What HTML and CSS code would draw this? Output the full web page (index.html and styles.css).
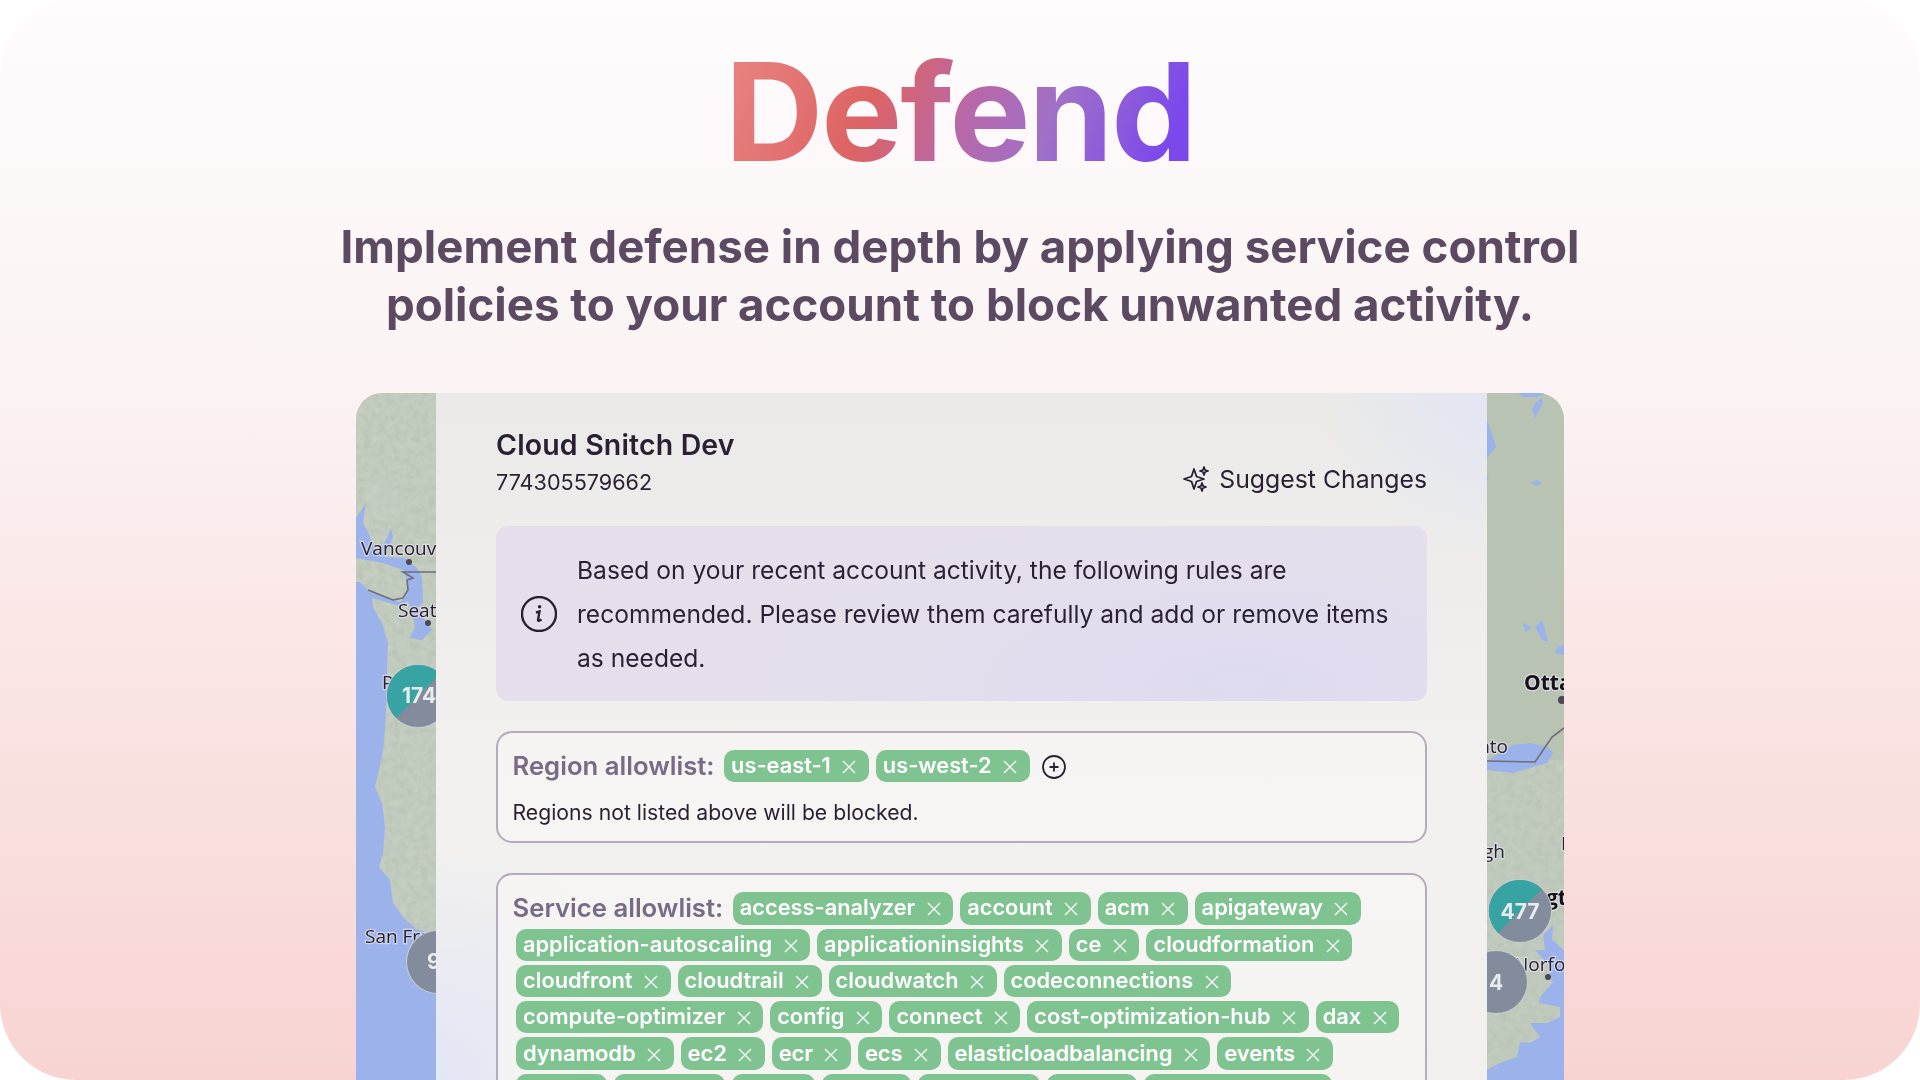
FILE: index.html
```html
<!DOCTYPE html>
<html>
<head>
    <title>Defend</title>
    <link rel="stylesheet" href="styles.css">
</head>
<body>
    <svg class="defs" width="0" height="0">
        <defs>
            <symbol id="x" viewBox="0 0 14 14">
                <path d="M1 1L13 13M13 1L1 13"/>
            </symbol>
            <filter id="relief" x="0" y="0" width="100%" height="100%">
                <feTurbulence type="fractalNoise" baseFrequency="0.14" numOctaves="3" seed="7"/>
                <feColorMatrix type="saturate" values="0"/>
                <feComponentTransfer>
                    <feFuncA type="linear" slope="0" intercept="1"/>
                </feComponentTransfer>
            </filter>
        </defs>
    </svg>

    <div class="slide">
        <h1 class="title">Defend</h1>
        <p class="subtitle">Implement defense in depth by applying service control<br>policies to your account to block unwanted activity.</p>

        <div class="card">
            <div class="map map-left">
                <svg viewBox="356 393 80 687" width="80" height="687">
                    <rect class="land" x="356" y="393" width="80" height="687"/>
                    <rect class="relief" x="356" y="393" width="80" height="687" filter="url(#relief)"/>
                    <ellipse class="snow" cx="383" cy="500" rx="15" ry="20"/>
                    <ellipse class="snow" cx="372" cy="490" rx="7" ry="7"/>
                    <path class="water" d="M356 518L366 503L363 522L370 537L378 553L387 538L391 528L393 537L385 557L405 558L417 568L422 577L423 603L418 607L425 620L432 630L422 640L410 638L415 627L413 617L407 597L408 583L403 570L383 563L356 558Z"/>
                    <path class="water" d="M356 582L360 582L370 592L400 602L407 595L409 600L400 606L372 598L373 607L382 623L388 643L387 667L387 690L385 730L383 750L379 770L375 787L382 803L385 827L383 853L379 867L390 880L393 903L403 917L417 930L436 933L436 1080L356 1080Z"/>
                    <path class="border" d="M368 590L393 600L403 598L408 590L407 580L413 578L403 572L436 572"/>
                    <text class="label" x="361" y="555">Vancouver</text>
                    <circle class="dot" cx="409" cy="562" r="3"/>
                    <text class="label" x="398" y="617">Seattle</text>
                    <circle class="dot" cx="428" cy="623" r="3"/>
                    <text class="label" x="382" y="689">P</text>
                    <circle class="cluster-edge" cx="418" cy="696" r="32"/>
                    <circle class="cluster-grey" cx="418" cy="696" r="31"/>
                    <path class="cluster-teal" d="M396 718A31 31 0 0 1 440 674Z"/>
                    <text class="count" x="402" y="703">174</text>
                    <text class="label" x="365" y="943">San Francisco</text>
                    <circle class="cluster-edge" cx="438" cy="962" r="32"/>
                    <circle class="cluster-grey" cx="438" cy="962" r="31"/>
                    <text class="count" x="427" y="969">9</text>
                </svg>
            </div>

            <div class="panel">
                <div class="panel-head">
                    <div>
                        <div class="account-name">Cloud Snitch Dev</div>
                        <div class="account-id">774305579662</div>
                    </div>
                    <div class="suggest">
                        <svg class="sparkle" viewBox="0 0 26 26" width="26" height="26">
                            <path d="M11 3L13.5 10.5L21 13L13.5 15.5L11 23L8.5 15.5L1 13L8.5 10.5Z"/>
                            <path d="M21 1L22 4L25 5L22 6L21 9L20 6L17 5L20 4Z"/>
                            <path d="M19 17L20 20L23 21L20 22L19 25L18 22L15 21L18 20Z"/>
                        </svg>
                        Suggest Changes
                    </div>
                </div>

                <div class="notice">
                    <svg class="info" viewBox="0 0 36 36" width="36" height="36">
                        <circle cx="18" cy="18" r="17"/>
                        <path d="M15 16.5L18.5 15.5L17 24C17 25 18 25.3 20.5 23.5"/>
                        <circle class="info-dot" cx="18.6" cy="10.8" r="1.7"/>
                    </svg>
                    <p>Based on your recent account activity, the following rules are recommended. Please review them carefully and add or remove items as needed.</p>
                </div>

                <div class="rules">
                    <div class="chips">
                        <span class="chips-label">Region allowlist:</span>
                        <span class="pill">us-east-1<svg class="pill-x"><use href="#x"/></svg></span>
                        <span class="pill">us-west-2<svg class="pill-x"><use href="#x"/></svg></span>
                        <svg class="add" viewBox="0 0 24 24" width="24" height="24">
                            <circle cx="12" cy="12" r="11"/>
                            <path d="M12 7.5V16.5M7.5 12H16.5"/>
                        </svg>
                    </div>
                    <div class="hint">Regions not listed above will be blocked.</div>
                </div>

                <div class="rules">
                    <div class="chips">
                        <span class="chips-label">Service allowlist:</span>
                        <span class="pill">access-analyzer<svg class="pill-x"><use href="#x"/></svg></span>
                        <span class="pill">account<svg class="pill-x"><use href="#x"/></svg></span>
                        <span class="pill">acm<svg class="pill-x"><use href="#x"/></svg></span>
                        <span class="pill">apigateway<svg class="pill-x"><use href="#x"/></svg></span>
                        <span class="pill">application-autoscaling<svg class="pill-x"><use href="#x"/></svg></span>
                        <span class="pill">applicationinsights<svg class="pill-x"><use href="#x"/></svg></span>
                        <span class="pill">ce<svg class="pill-x"><use href="#x"/></svg></span>
                        <span class="pill">cloudformation<svg class="pill-x"><use href="#x"/></svg></span>
                        <span class="pill">cloudfront<svg class="pill-x"><use href="#x"/></svg></span>
                        <span class="pill">cloudtrail<svg class="pill-x"><use href="#x"/></svg></span>
                        <span class="pill">cloudwatch<svg class="pill-x"><use href="#x"/></svg></span>
                        <span class="pill">codeconnections<svg class="pill-x"><use href="#x"/></svg></span>
                        <span class="pill">compute-optimizer<svg class="pill-x"><use href="#x"/></svg></span>
                        <span class="pill">config<svg class="pill-x"><use href="#x"/></svg></span>
                        <span class="pill">connect<svg class="pill-x"><use href="#x"/></svg></span>
                        <span class="pill">cost-optimization-hub<svg class="pill-x"><use href="#x"/></svg></span>
                        <span class="pill">dax<svg class="pill-x"><use href="#x"/></svg></span>
                        <span class="pill">dynamodb<svg class="pill-x"><use href="#x"/></svg></span>
                        <span class="pill">ec2<svg class="pill-x"><use href="#x"/></svg></span>
                        <span class="pill">ecr<svg class="pill-x"><use href="#x"/></svg></span>
                        <span class="pill">ecs<svg class="pill-x"><use href="#x"/></svg></span>
                        <span class="pill">elasticloadbalancing<svg class="pill-x"><use href="#x"/></svg></span>
                        <span class="pill">events<svg class="pill-x"><use href="#x"/></svg></span>
                        <span class="pill">glue<svg class="pill-x"><use href="#x"/></svg></span>
                        <span class="pill">health<svg class="pill-x"><use href="#x"/></svg></span>
                        <span class="pill">iam<svg class="pill-x"><use href="#x"/></svg></span>
                        <span class="pill">kms<svg class="pill-x"><use href="#x"/></svg></span>
                        <span class="pill">lambda<svg class="pill-x"><use href="#x"/></svg></span>
                        <span class="pill">logs<svg class="pill-x"><use href="#x"/></svg></span>
                        <span class="pill">organizations<svg class="pill-x"><use href="#x"/></svg></span>
                    </div>
                </div>
            </div>

            <div class="map map-right">
                <svg viewBox="1487 393 77 687" width="77" height="687">
                    <rect class="land" x="1487" y="393" width="77" height="687"/>
                    <rect class="relief relief-low" x="1487" y="760" width="77" height="320" filter="url(#relief)"/>
                    <path class="water" d="M1518 393L1547 393L1537 397L1523 397Z"/>
                    <path class="water" d="M1542 398L1543 403L1535 418L1532 410L1535 403Z"/>
                    <path class="water" d="M1487 420L1492 433L1496 447L1487 458Z"/>
                    <path class="water" d="M1487 475L1489 478L1487 480Z"/>
                    <path class="water" d="M1530 483L1537 480L1542 483L1537 486Z"/>
                    <path class="water" d="M1523 623L1532 627L1525 633Z"/>
                    <path class="water" d="M1542 620L1535 627L1542 640L1548 642L1545 630Z"/>
                    <path class="water" d="M1564 645L1558 647L1554 653L1564 655Z"/>
                    <path class="water" d="M1513 745L1530 743L1548 747L1553 753L1547 763L1513 773L1487 770L1487 761Z"/>
                    <path class="water" d="M1543 935L1553 925L1552 940L1564 950L1564 978L1552 982L1548 965L1535 950L1545 950Z"/>
                    <path class="water" d="M1564 973L1552 983L1540 997L1539 1003L1560 1007L1560 1017L1547 1023L1530 1023L1540 1037L1530 1043L1520 1042L1517 1057L1500 1063L1487 1070L1487 1080L1564 1080Z"/>
                    <path class="border" d="M1487 761L1535 762L1552 737L1564 728"/>
                    <text class="label label-bold" x="1524" y="690">Ottawa</text>
                    <circle class="dot dot-big" cx="1562" cy="700" r="4"/>
                    <text class="label label-end" x="1508" y="753">Toronto</text>
                    <text class="label label-end" x="1505" y="858">Raleigh</text>
                    <text class="label" x="1561" y="850">P</text>
                    <text class="label label-bold" x="1546" y="905">gton</text>
                    <text class="label" x="1514" y="971">Norfolk</text>
                    <circle class="dot" cx="1548" cy="977" r="3"/>
                    <circle class="cluster-edge" cx="1520" cy="911" r="32"/>
                    <circle class="cluster-grey" cx="1520" cy="911" r="31"/>
                    <path class="cluster-teal" d="M1498 933A31 31 0 0 1 1542 889Z"/>
                    <text class="count count-mid" x="1520" y="919">477</text>
                    <circle class="cluster-edge" cx="1496" cy="982" r="32"/>
                    <circle class="cluster-grey" cx="1496" cy="982" r="31"/>
                    <text class="count" x="1489" y="990">4</text>
                </svg>
            </div>
        </div>
    </div>
</body>
</html>
```

FILE: styles.css
```css
body {
    margin: 0;
    background-color: #fff;
    font-family: Inter, "Liberation Sans", sans-serif;
    color: #2a1f33;
}
.defs {
    position: absolute;
}
.slide {
    width: 1920px;
    height: 1080px;
    border-radius: 76px;
    overflow: hidden;
    padding-top: 44px;
    box-sizing: border-box;
    display: flex;
    flex-direction: column;
    align-items: center;
    background: linear-gradient(180deg, #fefcfd 0%, #fbf3f3 35%, #fae4e3 65%, #f7d4d2 100%);
}
.title {
    margin: 0;
    font-size: 136px;
    line-height: 136px;
    font-weight: 700;
    letter-spacing: -2px;
    background: linear-gradient(112deg, #e98683 0%, #dd6363 32%, #b768aa 52%, #a070c8 68%, #7c48ec 92%);
    -webkit-background-clip: text;
    background-clip: text;
    color: transparent;
}
.subtitle {
    margin: 38px 0 0;
    font-size: 45.7px;
    line-height: 58px;
    font-weight: 700;
    text-align: center;
    color: #5c4a63;
}
.card {
    margin-top: 59px;
    width: 1208px;
    flex: 1;
    min-height: 0;
    display: flex;
    border-radius: 26px 26px 0 0;
    overflow: hidden;
}

/* map strips */
.map {
    width: 80px;
    flex-shrink: 0;
}
.map-right {
    width: 77px;
}
.map svg {
    display: block;
}
.land {
    fill: #b8c3b4;
}
.relief {
    opacity: .25;
    mix-blend-mode: overlay;
}
.relief-low {
    opacity: .2;
}
.snow {
    fill: #cdd3cf;
    opacity: .22;
}
.water {
    fill: #9bb3ea;
}
.border {
    fill: none;
    stroke: #6f6d78;
    stroke-width: 1.6;
}
.label {
    font-family: "Open Sans", sans-serif;
    font-size: 19px;
    fill: #2a2030;
    stroke: rgba(226, 226, 236, .7);
    stroke-width: 2.5px;
    paint-order: stroke;
}
.label-bold {
    font-weight: 700;
    font-size: 21px;
    fill: #15101a;
}
.label-end {
    text-anchor: end;
}
.dot {
    fill: #4a4850;
}
.cluster-edge {
    fill: #c9ccd0;
}
.cluster-grey {
    fill: #828c9c;
}
.cluster-teal {
    fill: #37a3a3;
}
.count {
    font-size: 21px;
    font-weight: 700;
    fill: #e9ecec;
}
.count-mid {
    text-anchor: middle;
}

/* middle panel */
.panel {
    flex: 1;
    min-width: 0;
    padding: 35px 60px 0;
    overflow: hidden;
    background:
        radial-gradient(circle at 100% 0%, #e2e6f3 0, rgba(226, 230, 243, 0) 170px),
        radial-gradient(ellipse 240px 240px at 0% 100%, #e3e6f5 0, rgba(227, 230, 245, 0) 100%),
        linear-gradient(180deg, #ebeae8 0%, #f2f1ef 60%, #f1f0ef 100%);
}
.panel-head {
    display: flex;
    justify-content: space-between;
    align-items: flex-end;
}
.account-name {
    font-size: 28.5px;
    line-height: 34px;
    font-weight: 600;
    letter-spacing: .15px;
}
.account-id {
    margin-top: 7px;
    font-size: 21.6px;
    line-height: 26px;
}
.suggest {
    display: flex;
    align-items: center;
    gap: 10px;
    font-size: 24.8px;
    line-height: 30px;
    margin-bottom: 1px;
}
.sparkle {
    fill: none;
    stroke: #2a1f33;
    stroke-width: 1.8;
    stroke-linejoin: round;
}
.notice {
    margin-top: 31px;
    height: 175px;
    display: flex;
    align-items: center;
    border-radius: 12px;
    padding: 0 30px 0 25px;
    background: radial-gradient(ellipse 500px 180px at 80% 90%, #dfdbf0 0, rgba(223, 219, 240, 0) 100%), #e6dfeb;
}
.notice p {
    margin: 0 0 0 20px;
    font-size: 24.6px;
    line-height: 44px;
}
.info {
    flex-shrink: 0;
    fill: none;
    stroke: #2a1f33;
    stroke-width: 2.4;
}
.info-dot {
    fill: #2a1f33;
    stroke: none;
}
.rules {
    margin-top: 30px;
    border: 2px solid #b8a9bd;
    border-radius: 16px;
    padding: 15px 14.5px 15px;
    background-color: rgba(247, 245, 244, .75);
}
.chips {
    display: flex;
    flex-wrap: wrap;
    align-items: center;
}
.chips-label {
    margin-right: 6px;
    font-size: 25.7px;
    line-height: 32px;
    font-weight: 600;
    color: #796a85;
}
.pill {
    display: inline-flex;
    align-items: center;
    box-sizing: border-box;
    height: 32.3px;
    margin: 2px 3.5px;
    padding: 0 12.5px 2px 7px;
    border-radius: 10px;
    background-color: #7fc391;
    color: #fff;
    font-size: 21.8px;
    font-weight: 600;
    line-height: 30px;
}
.pill-x {
    width: 14px;
    height: 14px;
    margin-left: 11.5px;
    margin-top: 4px;
    fill: none;
    stroke: #fff;
    stroke-width: 1.3;
}
.add {
    margin-left: 9px;
    margin-top: 2px;
    width: 24px;
    height: 24px;
    fill: none;
    stroke: #2a1f33;
    stroke-width: 1.8;
}
.hint {
    margin-top: 14px;
    font-size: 21.2px;
    line-height: 28px;
}
```
